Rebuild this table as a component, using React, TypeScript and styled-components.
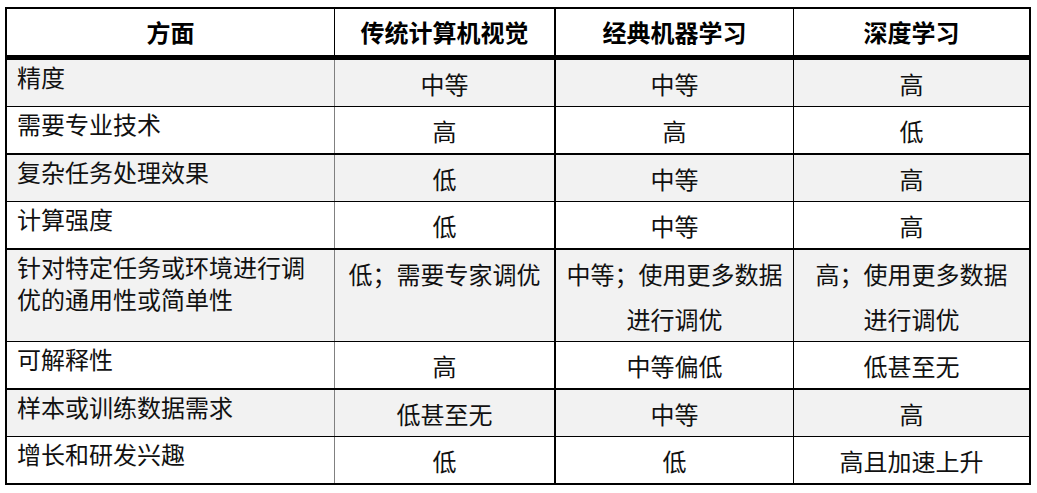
import React from "react";
import styled, { createGlobalStyle, css } from "styled-components";

const GlobalStyle = createGlobalStyle`
  * {
    box-sizing: border-box;
  }
  body {
    margin: 0;
    background: #ffffff;
    font-family: "Noto Sans CJK SC", "Noto Sans", sans-serif;
    color: #111111;
  }
`;

const Page = styled.div`
  padding: 7px 0 0 5px;
`;

const Table = styled.div`
  display: flex;
  flex-direction: column;
  width: 1026px;
  border: 2px solid #000000;
  border-bottom: none;
`;

interface IRowStyle {
  shaded: boolean;
  bottom: number;
}

const Row = styled.div<IRowStyle>`
  display: grid;
  grid-template-columns: 328px 221px 238px 235px;
  background-color: ${(props) => (props.shaded ? "#f2f2f2" : "#ffffff")};
  border-bottom: ${(props) => props.bottom}px solid #000000;
`;

const dividers = css<{ head?: boolean }>`
  &:nth-child(1) {
    border-right: 1px solid ${(props) => (props.head ? "#000000" : "#808080")};
  }
  &:nth-child(2) {
    border-right: 2px solid #000000;
  }
  &:nth-child(3) {
    border-right: 1px solid #000000;
  }
`;

const HeadCell = styled.div<{ head?: boolean }>`
  ${dividers};
  font-size: 24px;
  font-weight: 700;
  line-height: 46px;
  text-align: center;
  color: #000000;
`;

const LabelCell = styled.div<{ head?: boolean }>`
  ${dividers};
  padding: 1px 10px 0 10px;
  font-size: 24px;
  line-height: 32px;
  text-align: left;
`;

const ValueCell = styled.div<{ head?: boolean }>`
  ${dividers};
  padding: 1px 10px 0 10px;
  font-size: 24px;
  line-height: 45px;
  text-align: center;
`;

interface IRowData {
  aspect: string;
  values: string[];
}

const headers = ["方面", "传统计算机视觉", "经典机器学习", "深度学习"];

const rows: IRowData[] = [
  { aspect: "精度", values: ["中等", "中等", "高"] },
  { aspect: "需要专业技术", values: ["高", "高", "低"] },
  { aspect: "复杂任务处理效果", values: ["低", "中等", "高"] },
  { aspect: "计算强度", values: ["低", "中等", "高"] },
  {
    aspect: "针对特定任务或环境进行调优的通用性或简单性",
    values: ["低；需要专家调优", "中等；使用更多数据进行调优", "高；使用更多数据进行调优"],
  },
  { aspect: "可解释性", values: ["高", "中等偏低", "低甚至无"] },
  { aspect: "样本或训练数据需求", values: ["低甚至无", "中等", "高"] },
  { aspect: "增长和研发兴趣", values: ["低", "低", "高且加速上升"] },
];

const App = () => {
  return (
    <Page>
      <GlobalStyle />
      <Table>
        <Row shaded={false} bottom={5}>
          {headers.map((h) => (
            <HeadCell head key={h}>
              {h}
            </HeadCell>
          ))}
        </Row>
        {rows.map((row, i) => {
          const shaded = i % 2 === 0;
          return (
            <Row key={row.aspect} shaded={shaded} bottom={shaded ? 1 : 2}>
              <LabelCell>{row.aspect}</LabelCell>
              {row.values.map((v, j) => (
                <ValueCell key={j}>{v}</ValueCell>
              ))}
            </Row>
          );
        })}
      </Table>
    </Page>
  );
};

export default App;
